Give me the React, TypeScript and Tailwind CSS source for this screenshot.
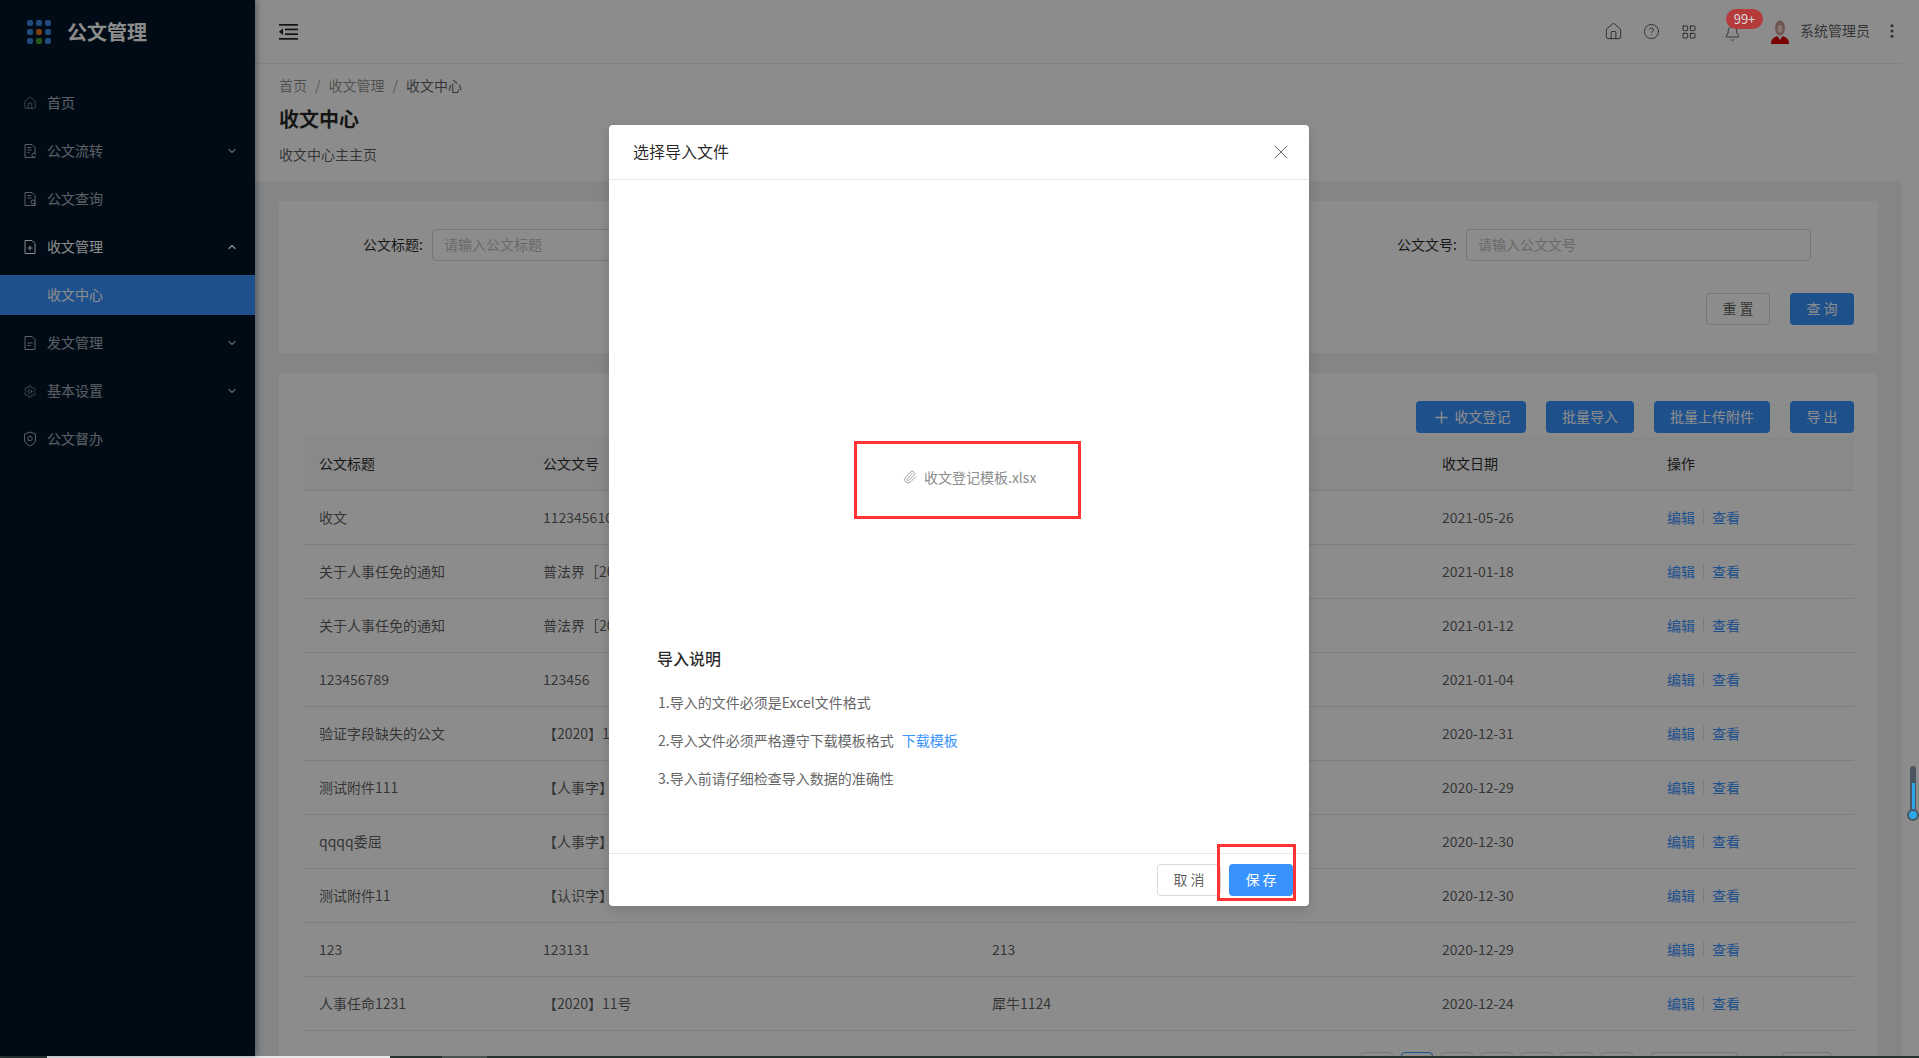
import { Bell, ChevronDown, ChevronUp, CircleHelp, EllipsisVertical, Home, LayoutGrid, Paperclip, Plus, Settings, X } from "lucide-react";
import type { ReactNode } from "react";

const FONT = "[font-family:'Noto_Sans_CJK_SC','Noto_Sans',sans-serif]";

const DocIcon = ({ children }: { children?: ReactNode }) => (
  <svg width="14" height="16" viewBox="0 0 14 16" fill="none" stroke="currentColor" strokeWidth="1">
    <path d="M2 1.5h7l3 3v10H2z" />
    {children}
  </svg>
);

const ShieldIcon = () => (
  <svg width="14" height="16" viewBox="0 0 14 16" fill="none" stroke="currentColor" strokeWidth="1">
    <path d="M7 1l5.5 2v6c0 2.5-2.500 4.500-5.500 6-3-1.500-5.500-3.500-5.500-6V3z" />
    <circle cx="7" cy="7.500" r="2.200" />
    <path d="M5.500 9.500l-1 1" />
  </svg>
);

const menu = [
  { label: "首页", icon: <Home size={18} strokeWidth={1.100} /> },
  {
    label: "公文流转",
    arrow: "down",
    icon: (
      <DocIcon>
        <path d="M4.500 4.500h4M4.500 7h4M4.500 9.500h2" />
        <path d="M12.500 11a2 2 0 1 0 0 2.500" fill="#001529" />
      </DocIcon>
    ),
  },
  {
    label: "公文查询",
    icon: (
      <DocIcon>
        <path d="M4.500 4.500h4M4.500 7h4" />
        <circle cx="10" cy="11" r="2" fill="#001529" />
        <path d="M11.500 12.500l1.500 1.500" />
      </DocIcon>
    ),
  },
  {
    label: "收文管理",
    arrow: "up",
    open: true,
    icon: (
      <DocIcon>
        <path d="M7 6.500v5M4.500 9h5" />
      </DocIcon>
    ),
  },
  { label: "收文中心", selected: true },
  {
    label: "发文管理",
    arrow: "down",
    icon: (
      <DocIcon>
        <path d="M4.500 8h5M4.500 10.500h3" />
      </DocIcon>
    ),
  },
  { label: "基本设置", arrow: "down", icon: <Settings size={17} strokeWidth={1.100} /> },
  { label: "公文督办", icon: <ShieldIcon /> },
];

const rows = [
  { title: "收文", no: "1123456100", other: "", date: "2021-05-26" },
  { title: "关于人事任免的通知", no: "普法界［2020］", other: "", date: "2021-01-18" },
  { title: "关于人事任免的通知", no: "普法界［2020］", other: "", date: "2021-01-12" },
  { title: "123456789", no: "123456", other: "", date: "2021-01-04" },
  { title: "验证字段缺失的公文", no: "【2020】11号", other: "", date: "2020-12-31" },
  { title: "测试附件111", no: "【人事字】", other: "", date: "2020-12-29" },
  { title: "qqqq委屈", no: "【人事字】", other: "", date: "2020-12-30" },
  { title: "测试附件11", no: "【认识字】", other: "", date: "2020-12-30" },
  { title: "123", no: "123131", other: "213", date: "2020-12-29" },
  { title: "人事任命1231", no: "【2020】11号", other: "犀牛1124", date: "2020-12-24" },
];

const logoDots = [
  "bg-[#3a8ae0]", "bg-[#3a8ae0]", "bg-[#3a8ae0]",
  "bg-[#3a8ae0]", "bg-[#e8701a]", "bg-[#3a8ae0]",
  "bg-[#3a8ae0]", "bg-[#46a32c]", "bg-[#3a8ae0]",
];

const PrimaryButton = ({ children, className = "" }: { children: ReactNode; className?: string }) => (
  <button className={`flex h-8 items-center justify-center rounded bg-[#3893ff] pb-[2px] text-sm text-white ${className}`}>
    {children}
  </button>
);

const Sidebar = () => (
  <aside className="relative z-10 h-full w-[255px] shrink-0 bg-[#001529] text-sm text-white/65 shadow-[2px_0_6px_rgba(0,21,41,0.35)]">
    <div className="flex h-[64px] items-center pl-[27px]">
      <div className="grid w-[24px] grid-cols-3 gap-[3px]">
        {logoDots.map((c, i) => (
          <span key={i} className={`h-[6px] w-[6px] rounded-[2px] ${c}`} />
        ))}
      </div>
      <span className="ml-[16px] text-[20px] font-bold text-white">公文管理</span>
    </div>
    <nav className="pt-[19px]">
      {menu.map((item) => (
        <div
          key={item.label}
          className={`mb-2 flex h-10 items-center pl-[23px] ${item.selected ? "bg-[#3893ff] text-white" : ""} ${item.open ? "text-white" : ""}`}
        >
          <span className="flex w-[14px] justify-center">{item.icon}</span>
          <span className="mb-[2px] ml-[10px]">{item.label}</span>
          {item.arrow === "down" && <ChevronDown size={12} strokeWidth={2.500} className="ml-auto mr-[17px]" />}
          {item.arrow === "up" && <ChevronUp size={12} strokeWidth={2.500} className="ml-auto mr-[17px]" />}
        </div>
      ))}
    </nav>
  </aside>
);

const TopBar = () => (
  <header className="flex h-[64px] shrink-0 items-center border-b border-[#eeeeee] bg-white text-black/65">
    <svg width="19" height="16" viewBox="0 0 19 16" className="ml-[24px] text-black/85" fill="currentColor">
      <rect x="0" y="0" width="19" height="1.700" />
      <rect x="6" y="4.600" width="13" height="1.700" />
      <rect x="6" y="9.300" width="13" height="1.700" />
      <rect x="0" y="14" width="19" height="1.700" />
      <path d="M4 4.500v6.500L0 7.800z" />
    </svg>
    <div className="ml-auto flex items-center">
      <span className="flex w-[38px] justify-center"><Home size={19} strokeWidth={1.200} /></span>
      <span className="flex w-[38px] justify-center"><CircleHelp size={17} strokeWidth={1.300} /></span>
      <span className="flex w-[38px] justify-center"><LayoutGrid size={16} strokeWidth={1.500} /></span>
      <span className="relative flex w-[48px] justify-center pt-[3px]">
        <Bell size={17} strokeWidth={1.300} />
        <span className="absolute left-[18px] top-[-13px] z-[60] flex h-5 w-[37px] items-center justify-center rounded-full bg-[#b53a3a] text-[13px] text-[#d9d9d9]">
          99+
        </span>
      </span>
      <svg width="20" height="24" viewBox="0 0 20 24" className="ml-[14px]">
        <path d="M1 24c0-5 3-8 9-8s9 3 9 8z" fill="#e00000" />
        <path d="M7.500 16l2.500 4 2.500-4z" fill="#ffffff" />
        <ellipse cx="10" cy="8" rx="5" ry="7.500" fill="#c99a90" />
        <ellipse cx="10" cy="9" rx="2.500" ry="4" fill="#f2d4cb" />
      </svg>
      <span className="mb-[3px] ml-[10px] text-sm">系统管理员</span>
      <span className="mb-[2px] ml-[12px] flex w-[20px] justify-center">
        <EllipsisVertical size={18} strokeWidth={2.200} />
      </span>
    </div>
  </header>
);

const PageHead = () => (
  <div className="h-[117px] shrink-0 bg-white pl-[24px] pt-[10px]">
    <div className="flex h-[22px] items-center gap-2 text-sm text-black/45">
      <span>首页</span>
      <span>/</span>
      <span>收文管理</span>
      <span>/</span>
      <span className="text-black/65">收文中心</span>
    </div>
    <h1 className="mt-[7px] h-[32px] text-[20px] font-bold leading-[32px] text-black/85">收文中心</h1>
    <p className="mt-[8px] text-sm leading-[22px] text-black/65">收文中心主主页</p>
  </div>
);

const Field = ({ label, placeholder }: { label: string; placeholder: string }) => (
  <div className="flex items-center">
    {label ? (
      <>
        <label className="mb-[2px] w-[120px] text-right text-sm text-black/85">{label}:</label>
        <div className="ml-[9px] flex h-8 w-[345px] items-center rounded border border-[#d9d9d9] bg-white px-[11px] pb-[2px] text-sm text-[#bfbfbf]">
          {placeholder}
        </div>
      </>
    ) : null}
  </div>
);

const SearchCard = () => (
  <section className="bg-white px-6 pb-7 pt-7">
    <div className="grid grid-cols-3">
      <Field label="公文标题" placeholder="请输入公文标题" />
      <Field label="" placeholder="" />
      <Field label="公文文号" placeholder="请输入公文文号" />
    </div>
    <div className="mt-8 flex justify-end gap-5">
      <button className="flex h-8 w-16 items-center justify-center rounded border border-[#d9d9d9] bg-white pb-[2px] text-sm text-black/65">
        重 置
      </button>
      <PrimaryButton className="w-16">查 询</PrimaryButton>
    </div>
  </section>
);

const gridCols = "grid grid-cols-[224px_449px_450px_225px_203px]";

const TableCard = () => (
  <section className="mt-5 bg-white px-6 pt-7">
    <div className="flex justify-end gap-5">
      <PrimaryButton className="w-[110px] gap-1">
        <Plus size={19} strokeWidth={1.800} className="mt-[2px]" />
        收文登记
      </PrimaryButton>
      <PrimaryButton className="w-[88px]">批量导入</PrimaryButton>
      <PrimaryButton className="w-[116px]">批量上传附件</PrimaryButton>
      <PrimaryButton className="w-16">导 出</PrimaryButton>
    </div>
    <div className={`${gridCols} mt-1 h-[54px] items-center border-b border-[#e4e4e4] bg-[#fafafa] pb-px text-sm text-black/85`}>
      <span className="px-4">公文标题</span>
      <span className="px-4">公文文号</span>
      <span className="px-4" />
      <span className="px-4">收文日期</span>
      <span className="px-4">操作</span>
    </div>
    {rows.map((row, i) => (
      <div key={i} className={`${gridCols} h-[54px] items-center border-b border-[#e4e4e4] pb-[2px] text-sm text-black/65`}>
        <span className="px-4">{row.title}</span>
        <span className="px-4">{row.no}</span>
        <span className="px-4">{row.other}</span>
        <span className="px-4">{row.date}</span>
        <span className="flex items-center px-4 text-[#3893ff]">
          <span>编辑</span>
          <span className="mx-2 h-[14px] w-px bg-[#e0e0e0]" />
          <span>查看</span>
        </span>
      </div>
    ))}
    <div className="mt-[21px] flex h-8 items-center">
      <div className="ml-[1058px] flex gap-2">
        {[0, 1, 2, 3, 4, 5, 6].map((n) => (
          <span key={n} className={`h-8 w-8 rounded border bg-white ${n === 1 ? "border-[#3893ff]" : "border-[#d9d9d9]"}`} />
        ))}
      </div>
      <span className="ml-[17px] h-8 w-[88px] rounded border border-[#d9d9d9] bg-white" />
      <span className="ml-[44px] h-8 w-[50px] rounded border border-[#d9d9d9] bg-white" />
    </div>
  </section>
);

const ImportModal = () => (
  <div className="relative h-[781px] w-[700px] rounded bg-white shadow-[0_4px_12px_rgba(0,0,0,0.15)]">
    <div className="flex h-[55px] items-center border-b border-[#e8e8e8] pl-6 pr-4">
      <span className="mb-[2px] text-base text-black/85">选择导入文件</span>
      <X size={24} strokeWidth={1} className="ml-auto text-black/60" />
    </div>
    <div className="h-[673px] px-[48px]">
      <div className="flex items-center pl-[246px] pt-[286px] text-sm leading-[22px] text-[#8c8c8c]">
        <Paperclip size={14} strokeWidth={1.300} className="mr-[7px] text-[#888888]" />
        <span>收文登记模板.xlsx</span>
      </div>
      <h3 className="mt-[158px] text-base font-medium leading-6 text-black/85">导入说明</h3>
      <div className="mt-[21px] flex flex-col gap-4 pl-px text-sm leading-[22px] text-[#666666]">
        <p>1.导入的文件必须是Excel文件格式</p>
        <p>
          2.导入文件必须严格遵守下载模板格式
          <span className="ml-[8px] text-[#3893ff]">下载模板</span>
        </p>
        <p>3.导入前请仔细检查导入数据的准确性</p>
      </div>
    </div>
    <div className="flex h-[53px] justify-end gap-2 border-t border-[#e8e8e8] pr-4 pt-[10px]">
      <button className="flex h-8 w-16 items-center justify-center rounded border border-[#d9d9d9] bg-white pb-[2px] text-sm text-black/65">
        取 消
      </button>
      <button className="flex h-8 w-16 items-center justify-center rounded bg-[#3893ff] pb-[2px] text-sm text-white">
        保 存
      </button>
    </div>
    {/* red annotation boxes from the original doc */}
    <div className="absolute left-[245px] top-[316px] h-[78px] w-[227px] border-[3px] border-[#ff3333]" />
    <div className="absolute left-[608px] top-[719px] h-[57px] w-[79px] border-[3px] border-[#ff3333]" />
  </div>
);

export default function App() {
  return (
    <div className={`flex h-screen w-screen flex-col overflow-hidden ${FONT}`}>
      <div className="relative flex min-h-0 flex-1 bg-white">
        <Sidebar />
        <div className="flex w-[1647px] shrink-0 flex-col overflow-hidden bg-[#f0f2f5]">
          <TopBar />
          <PageHead />
          <main className="px-6 pt-5">
            <SearchCard />
            <TableCard />
          </main>
        </div>

        <div className="absolute inset-0 z-50 flex justify-center bg-black/45 pr-px pt-[125px]">
          <ImportModal />
        </div>

        {/* floating slider widget on top of the page */}
        <div className="absolute left-[1910px] top-[766px] z-[60] h-[49px] w-[6px] rounded-t bg-[#4a5560]">
          <div className="absolute bottom-0 left-[1.5px] h-[32px] w-[3px] bg-[#2ea8e8]" />
        </div>
        <div className="absolute left-[1907px] top-[809px] z-[60] h-3 w-3 rounded-full border-2 border-[#4a5560] bg-[#2ea8e8]" />
      </div>

      {/* sliver of the desktop taskbar under the browser */}
      <div className="flex h-[2px] shrink-0 bg-[#27332f]">
        <span className="ml-[47px] w-[343px] bg-[#e8e8e8]" />
        <span className="ml-[52px] w-[45px] bg-[#4a5550]" />
      </div>
    </div>
  );
}
